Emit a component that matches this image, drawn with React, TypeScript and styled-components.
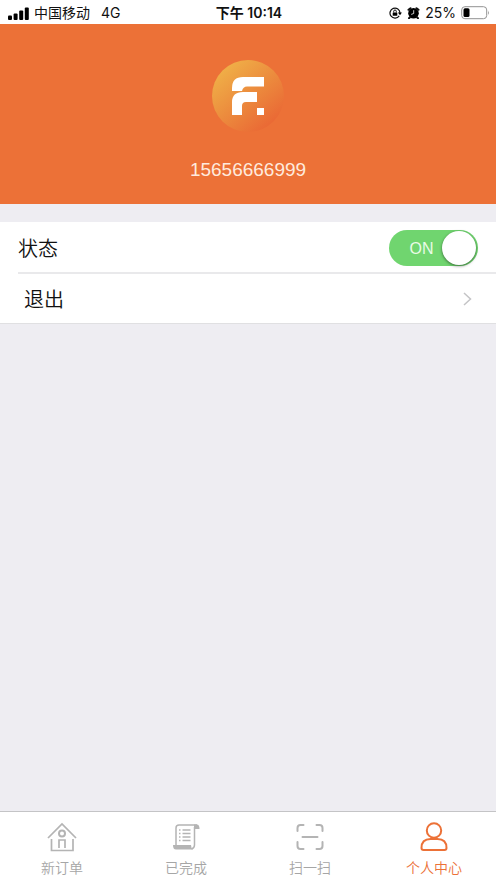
import React, { useState } from "react";
import styled, { createGlobalStyle } from "styled-components";

const GlobalStyle = createGlobalStyle`
  *, *::before, *::after { box-sizing: border-box; }
  body {
    margin: 0;
    background: #eeedf2;
    font-family: "Liberation Sans", "Noto Sans CJK SC", sans-serif;
    color: #111;
  }
`;

const Screen = styled.div`
  display: flex;
  flex-direction: column;
  min-height: 100vh;
`;

const StatusBar = styled.div`
  display: grid;
  grid-template-columns: 1fr auto 1fr;
  align-items: center;
  height: 24px;
  padding: 2px 6px 0 8px;
  background: #fff;
  font-family: Inter, "Noto Sans CJK SC", sans-serif;
  font-size: 14px;
  line-height: 20px;
`;

const StatusGroup = styled.div<{ $end?: boolean }>`
  display: flex;
  align-items: center;
  justify-content: ${(p) => (p.$end ? "flex-end" : "flex-start")};
  gap: 5px;
`;

const Network = styled.span`
  margin-left: 6px;
`;

const Clock = styled.time`
  font-weight: 600;
`;

const Profile = styled.header`
  display: flex;
  flex-direction: column;
  align-items: center;
  gap: 26px;
  height: 180px;
  padding-top: 36px;
  background: #ec7137;
`;

const Phone = styled.div`
  color: #ffeadd;
  font-size: 19px;
  line-height: 24px;
`;

const Settings = styled.main`
  margin-top: 18px;
  padding-left: 18px;
  background: #fff;
  border-bottom: 1px solid #e0e0e2;
`;

const rowStyle = `
  display: flex;
  align-items: center;
  justify-content: space-between;
  width: 100%;
  font-size: 20px;
  line-height: 30px;
`;

const RowText = styled.span`
  padding-top: 3px;
  font-weight: 350;
`;

const SwitchRow = styled.label`
  ${rowStyle}
  height: 52px;
  padding: 1px 18px 0 0;
  border-bottom: 2px solid #e9e9eb;
  cursor: pointer;
`;

const LinkRow = styled.button`
  ${rowStyle}
  height: 49px;
  padding: 0 24px 0 6px;
  border: 0;
  background: none;
  color: inherit;
  font-family: inherit;
  cursor: pointer;
`;

const Toggle = styled.span<{ $on: boolean }>`
  display: flex;
  flex-direction: ${(p) => (p.$on ? "row" : "row-reverse")};
  align-items: center;
  width: 89px;
  height: 36px;
  padding: 1px 2px;
  border-radius: 18px;
  background: ${(p) => (p.$on ? "#70d56f" : "#c8c8cc")};
`;

const ToggleInput = styled.input`
  position: absolute;
  opacity: 0;
`;

const ToggleText = styled.span`
  flex: 1;
  padding: 2px 0 0 10px;
  color: #e9fbe6;
  font-size: 16px;
  line-height: 20px;
  text-align: center;
`;

const Knob = styled.span`
  width: 34px;
  height: 34px;
  border-radius: 50%;
  background: #fff;
  box-shadow: 0 1px 3px rgba(0, 0, 0, 0.5);
`;

const TabBar = styled.nav`
  display: grid;
  grid-template-columns: repeat(4, 1fr);
  height: 71px;
  margin-top: auto;
  background: #fff;
  border-top: 1px solid #c4c4c6;
`;

const Tab = styled.a<{ $active?: boolean }>`
  display: flex;
  flex-direction: column;
  align-items: center;
  gap: 6px;
  padding-top: 10px;
  color: ${(p) => (p.$active ? "#ec7137" : "#a6a6a6")};
  font-size: 14px;
  line-height: 20px;
  font-weight: 350;
  text-decoration: none;
`;

const TabIcon = styled.svg`
  width: 30px;
  height: 30px;
  fill: none;
  stroke: ${(p) => p.color || "#b4b4b4"};
  stroke-width: 2;
`;

const Signal = () => (
  <svg width="21" height="13" viewBox="0 0 21 13" aria-hidden="true">
    <rect x="0" y="8.500" width="4" height="4.500" rx="1" />
    <rect x="5.600" y="6.500" width="4" height="6.500" rx="1" />
    <rect x="11.200" y="3.500" width="4" height="9.500" rx="1" />
    <rect x="16.800" y="0.500" width="4" height="12.500" rx="1" />
  </svg>
);

const RotationLock = () => (
  <svg width="13" height="12" viewBox="0 0 13 12" aria-hidden="true">
    <path d="M10.2 8.8A5 5 0 1 1 11 6" fill="none" stroke="#111" strokeWidth="1.2" />
    <path d="M8.9 5.5h4L11 8.2z" />
    <rect x="3.7" y="5.4" width="4.6" height="3.4" rx=".5" />
    <path d="M4.7 5.5V4.3a1.3 1.3 0 0 1 2.6 0v1.2" fill="none" stroke="#111" />
  </svg>
);

const Alarm = () => (
  <svg width="13" height="12" viewBox="0 0 13 12" aria-hidden="true">
    <circle cx="6.500" cy="6.200" r="5.300" />
    <path
      d="M1.500 2.800 3.500 1.200M11.500 2.800 9.500 1.200M3 10.200l-1 1M10 10.200l1 1"
      stroke="#111"
      strokeWidth="2"
      strokeLinecap="round"
    />
    <path d="M6.700 3.200v3.300L4.200 7.400" fill="none" stroke="#fff" strokeWidth=".8" />
  </svg>
);

const Battery = () => (
  <svg width="29" height="14" viewBox="0 0 29 14" aria-hidden="true">
    <rect x=".7" y=".7" width="25" height="12" rx="3.2" fill="#fff" stroke="#929292" />
    <rect x="2.5" y="2.3" width="6" height="8.8" rx="1.5" />
    <path d="M27 4.5q1.6 2.2 0 4.4z" fill="#929292" />
  </svg>
);

const Logo = () => (
  <svg width="72" height="72" viewBox="0 0 72 72" role="img" aria-label="F.">
    <defs>
      <linearGradient id="logoFill" x1="0.1" y1="0.1" x2="0.78" y2="0.9">
        <stop offset="0" stopColor="#f0b248" />
        <stop offset="0.5" stopColor="#ec8e3e" />
        <stop offset="1" stopColor="#ea6a35" />
      </linearGradient>
    </defs>
    <circle cx="36" cy="36" r="36" fill="url(#logoFill)" />
    <g fill="#fff">
      <path d="M20 31V28Q20 17 31 17H52V26.5H35Q31 26.5 30 31Z" />
      <path d="M20 55V42Q20 32 31 32H45V42H34Q30 42 30 46V55Z" />
      <rect x="45" y="48" width="7" height="7" />
    </g>
  </svg>
);

const HouseIcon = () => (
  <TabIcon viewBox="0 0 30 30" aria-hidden="true">
    <path d="M1 16 15 2l14 14M4.500 17v11.500h21.500V17M12 26v-8h6v8" strokeWidth="1.7" />
    <circle cx="15" cy="11.500" r="3" />
  </TabIcon>
);

const ListIcon = () => (
  <TabIcon viewBox="0 0 30 30" aria-hidden="true">
    <path d="M5 23V6q0-3 3-3h18M23.500 5v18q0 3-3 4" strokeWidth="1.500" />
    <path d="M23 2.500h3q2.500 0 2.500 4.500h-5.500zM2 23h18q0 3 2 4.500H5q-3 0-3-4.500z" fill="#b4b4b4" stroke="none" />
    <path d="M11.500 8h8M11.500 11.500h8M11.500 15h8M11.500 18.500h8" strokeWidth="1.500" />
    <path d="M8 8h1.500M8 11.500h1.500M8 15h1.500M8 18.500h1.500" strokeWidth="1.500" />
  </TabIcon>
);

const ScanIcon = () => (
  <TabIcon viewBox="0 0 30 30" aria-hidden="true">
    <path
      d="M2.500 9V6q0-3 3-3h3M21.500 3h3q3 0 3 3v3M27.500 20v4q0 3-3 3h-3M8.500 27h-3q-3 0-3-3v-4M7.500 15h15"
      strokeLinecap="round"
    />
  </TabIcon>
);

const PersonIcon = () => (
  <TabIcon viewBox="0 0 30 30" color="#ec7137" aria-hidden="true">
    <circle cx="15" cy="8.500" r="7.200" />
    <path d="M2.500 26q0-9 9-9h7q9 0 9 9 0 2-2 2h-21q-2 0-2-2z" />
  </TabIcon>
);

const Chevron = () => (
  <svg width="9" height="14" viewBox="0 0 9 14" aria-hidden="true">
    <path d="m1 1 6.500 6L1 13" fill="none" stroke="#c4c4c6" strokeWidth="1.500" />
  </svg>
);

const tabs = [
  { id: "new", label: "新订单", Icon: HouseIcon },
  { id: "done", label: "已完成", Icon: ListIcon },
  { id: "scan", label: "扫一扫", Icon: ScanIcon },
  { id: "me", label: "个人中心", Icon: PersonIcon, active: true },
];

export default function App() {
  const [online, setOnline] = useState(true);

  return (
    <>
      <GlobalStyle />
      <Screen lang="zh-CN">
        <StatusBar>
          <StatusGroup>
            <Signal />
            <span>中国移动</span>
            <Network>4G</Network>
          </StatusGroup>
          <Clock>下午 10:14</Clock>
          <StatusGroup $end>
            <RotationLock />
            <Alarm />
            <span>25%</span>
            <Battery />
          </StatusGroup>
        </StatusBar>
        <Profile>
          <Logo />
          <Phone>15656666999</Phone>
        </Profile>
        <Settings>
          <SwitchRow>
            <RowText>状态</RowText>
            <ToggleInput
              type="checkbox"
              role="switch"
              aria-label="状态"
              checked={online}
              onChange={(e) => setOnline(e.target.checked)}
            />
            <Toggle $on={online}>
              <ToggleText>{online ? "ON" : "OFF"}</ToggleText>
              <Knob />
            </Toggle>
          </SwitchRow>
          <LinkRow type="button">
            <RowText>退出</RowText>
            <Chevron />
          </LinkRow>
        </Settings>
        <TabBar>
          {tabs.map(({ id, label, Icon, active }) => (
            <Tab key={id} href={`#${id}`} $active={active} aria-current={active ? "page" : undefined}>
              <Icon />
              {label}
            </Tab>
          ))}
        </TabBar>
      </Screen>
    </>
  );
}
